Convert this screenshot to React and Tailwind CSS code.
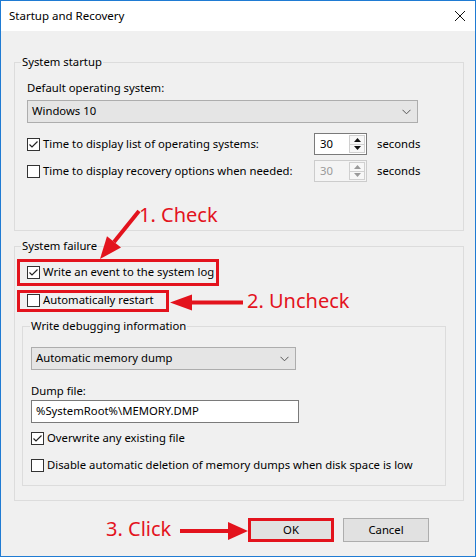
import React from 'react';

const RED = '#e3131d';

function Check({ checked }) {
  return (
    <span className="w-[13px] h-[13px] border border-[#333] bg-white shrink-0 flex items-center justify-center">
      {checked && (
        <svg width="11" height="11" viewBox="0 0 11 11">
          <path d="M1.5 5.5 L4 8 L9.5 2.5" fill="none" stroke="#222" strokeWidth="1.2" />
        </svg>
      )}
    </span>
  );
}

function Chevron() {
  return (
    <svg width="9" height="6" viewBox="0 0 9 6">
      <path d="M0.5 0.8 L4.5 4.8 L8.5 0.8" fill="none" stroke="#555" strokeWidth="1" />
    </svg>
  );
}

function Spinner({ disabled }) {
  const tri = disabled ? '#9a9a9a' : '#111';
  return (
    <div
      className={
        'w-[53px] h-[22px] flex border ' +
        (disabled ? 'border-[#cccccc] bg-[#f4f4f4] text-[#9a9a9a]' : 'border-[#7a7a7a] bg-white text-black')
      }
    >
      <span className="flex-1 pl-[5px] leading-[20px]">30</span>
      <div className="w-[16px] my-[1px] mr-[1px] flex flex-col border border-[#d0d0d0] bg-[#f7f7f7]">
        <div className="flex-1 flex items-center justify-center border-b border-[#d0d0d0]">
          <svg width="7" height="4" viewBox="0 0 7 4"><path d="M0 4 L3.5 0 L7 4 Z" fill={tri} /></svg>
        </div>
        <div className="flex-1 flex items-center justify-center">
          <svg width="7" height="4" viewBox="0 0 7 4"><path d="M0 0 L3.5 4 L7 0 Z" fill={tri} /></svg>
        </div>
      </div>
    </div>
  );
}

function Row({ checked, children, className = '' }) {
  return (
    <div className={'flex items-center h-[16px] ' + className}>
      <Check checked={checked} />
      <span className="ml-[3px] leading-[16px] whitespace-nowrap">{children}</span>
    </div>
  );
}

export default function App() {
  return (
    <div className="relative w-[476px] h-[557px] text-[11.3px] text-black font-['Noto_Sans',sans-serif]">
      <div className="w-full h-full flex flex-col border border-[#1f7bd3] bg-[#f0f0f0]">
        {/* title bar */}
        <div className="h-[30px] shrink-0 bg-white flex items-center justify-between pl-[8px] pr-[9px]">
          <span className="text-[11.5px]">Startup and Recovery</span>
          <svg width="12" height="12" viewBox="0 0 12 12">
            <path d="M1 1 L11 11 M11 1 L1 11" stroke="#111" strokeWidth="1" />
          </svg>
        </div>

        <div className="flex-1 pl-[13px] pr-[11px]">
          {/* System startup */}
          <fieldset className="mt-[23px] border border-[#dcdcdc] pl-[6px] pb-[48px]">
            <legend className="px-[1px] leading-[16px]">System startup</legend>
            <div className="ml-[6px]">
              <div className="mt-[10px] leading-[16px]">Default operating system:</div>
              <div className="mt-[4px] w-[391px] h-[23px] border border-[#adadad] bg-[#e5e5e5] flex items-center justify-between pl-[4px] pr-[6px]">
                <span>Windows 10</span>
                <Chevron />
              </div>
              <div className="mt-[10px] h-[22px] flex items-center">
                <div className="w-[287px]">
                  <Row checked>Time to display list of operating systems:</Row>
                </div>
                <Spinner />
                <span className="ml-[10px]">seconds</span>
              </div>
              <div className="mt-[5px] h-[22px] flex items-center">
                <div className="w-[287px]">
                  <Row>Time to display recovery options when needed:</Row>
                </div>
                <Spinner disabled />
                <span className="ml-[10px]">seconds</span>
              </div>
            </div>
          </fieldset>

          {/* System failure */}
          <fieldset className="mt-[7px] border border-[#dcdcdc] pl-[6px] pb-[14px]">
            <legend className="px-[1px] leading-[16px]">System failure</legend>
            <Row checked className="mt-[10px] ml-[6px]">Write an event to the system log</Row>
            <Row className="mt-[12px] ml-[6px]">Automatically restart</Row>

            <fieldset className="mt-[10px] ml-[1px] mr-[17px] border border-[#dcdcdc] pl-[7px] pb-[12px]">
              <legend className="px-[1px] leading-[16px]">Write debugging information</legend>
              <div className="ml-[1px]">
                <div className="mt-[13px] w-[265px] h-[23px] border border-[#adadad] bg-[#e5e5e5] flex items-center justify-between pl-[4px] pr-[6px]">
                  <span>Automatic memory dump</span>
                  <Chevron />
                </div>
                <div className="mt-[13px] leading-[16px]">Dump file:</div>
                <div className="mt-[1px] w-[268px] h-[23px] border border-[#7a7a7a] bg-white flex items-center pl-[4px]">
                  %SystemRoot%\MEMORY.DMP
                </div>
                <Row checked className="mt-[7px]">Overwrite any existing file</Row>
                <Row className="mt-[11px]">Disable automatic deletion of memory dumps when disk space is low</Row>
              </div>
            </fieldset>
          </fieldset>

          {/* buttons */}
          <div className="mt-[17px] mr-[35px] flex justify-end gap-[9px]">
            <button className="w-[86px] h-[24px] border border-[#adadad] bg-[#e1e1e1]">OK</button>
            <button className="w-[86px] h-[24px] border border-[#adadad] bg-[#e1e1e1]">Cancel</button>
          </div>
        </div>
      </div>

      {/* annotations */}
      <svg className="absolute left-0 top-0 pointer-events-none" width="476" height="557" viewBox="0 0 476 557">
        <rect x="18.5" y="260.5" width="199" height="24" fill="none" stroke={RED} strokeWidth="3" />
        <rect x="18.5" y="291.5" width="149" height="19" fill="none" stroke={RED} strokeWidth="3" />
        <rect x="249.5" y="519.5" width="83" height="21" fill="none" stroke={RED} strokeWidth="3" />

        <line x1="139" y1="211" x2="114" y2="242" stroke={RED} strokeWidth="4" />
        <polygon points="100,259 121,247.6 107,236.2" fill={RED} />

        <line x1="243" y1="302.5" x2="189" y2="302.5" stroke={RED} strokeWidth="4" />
        <polygon points="170,302.5 192,294.5 192,310.5" fill={RED} />

        <line x1="180" y1="531" x2="231" y2="531" stroke={RED} strokeWidth="4" />
        <polygon points="248,531 228,522 228,540" fill={RED} />
      </svg>
      <span className="absolute left-[139px] top-[203px] text-[20px] leading-[24px] text-[#e3131d] pointer-events-none">1. Check</span>
      <span className="absolute left-[247px] top-[289px] text-[20px] leading-[24px] text-[#e3131d] pointer-events-none">2. Uncheck</span>
      <span className="absolute left-[106px] top-[517px] text-[20px] leading-[24px] text-[#e3131d] pointer-events-none">3. Click</span>
    </div>
  );
}
